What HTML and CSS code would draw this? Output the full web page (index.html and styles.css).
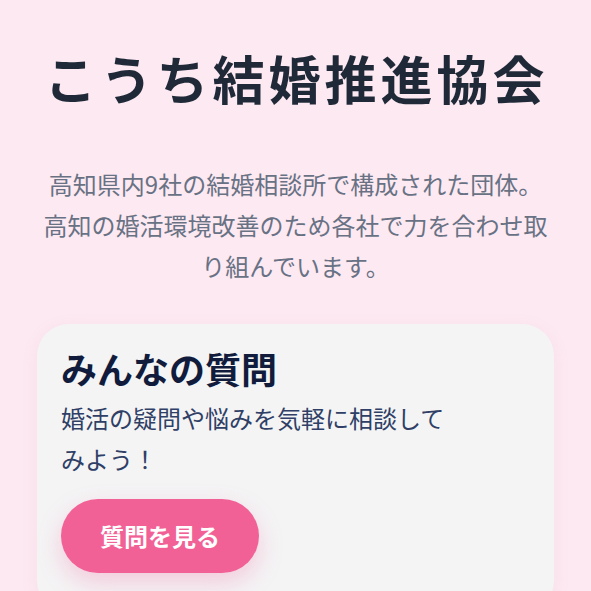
FILE: index.html
```html
<!DOCTYPE html>
<html lang="ja">
<head>
  <meta charset="UTF-8" />
  <title>こうち結婚推進協会</title>
  <link rel="stylesheet" href="styles.css">
</head>
<body>

<header class="hero">
  <h1>こうち結婚推進協会</h1>
  <p class="lead">高知県内9社の結婚相談所で構成された団体。高知の婚活環境改善のため各社で力を合わせ取り組んでいます。</p>
</header>

<section class="card">
  <h2>みんなの質問</h2>
  <p class="card-text">婚活の疑問や悩みを気軽に相談してみよう！</p>
  <a class="btn" href="#">質問を見る</a>
</section>

</body>
</html>
```

FILE: styles.css
```css
body {
  margin: 0;
  padding: 0 37px;
  background: #fde9f2;
  font-family: "Noto Sans CJK JP", "Noto Sans", sans-serif;
}
.hero {
  text-align: center;
  padding-top: 45px;
}
h1 {
  margin: 0;
  padding-left: 2px;
  font-size: 52px;
  line-height: 66px;
  font-weight: 700;
  letter-spacing: 4px;
  color: #1f2937;
}
.lead {
  margin: 52px 0 0;
  padding: 0 3px;
  font-size: 24px;
  line-height: 41px;
  color: #687284;
}
.card {
  margin-top: 38px;
  background: #f4f4f5;
  border-radius: 32px;
  padding: 21px 24px 40px;
  box-shadow: 0 4px 16px rgba(200, 150, 170, 0.12);
}
h2 {
  margin: 0;
  font-size: 36px;
  line-height: 46px;
  font-weight: 700;
  color: #111c3d;
}
.card-text {
  margin: 6px 0 0;
  max-width: 395px;
  font-size: 24px;
  line-height: 41px;
  color: #2f3f66;
}
.btn {
  display: inline-block;
  margin-top: 20px;
  padding: 19px 39px;
  font-size: 24px;
  line-height: 36px;
  font-weight: 700;
  color: #fff;
  text-decoration: none;
  background: #f26196;
  border-radius: 40px;
  box-shadow: 0 10px 24px rgba(242, 97, 150, 0.28);
}
```
